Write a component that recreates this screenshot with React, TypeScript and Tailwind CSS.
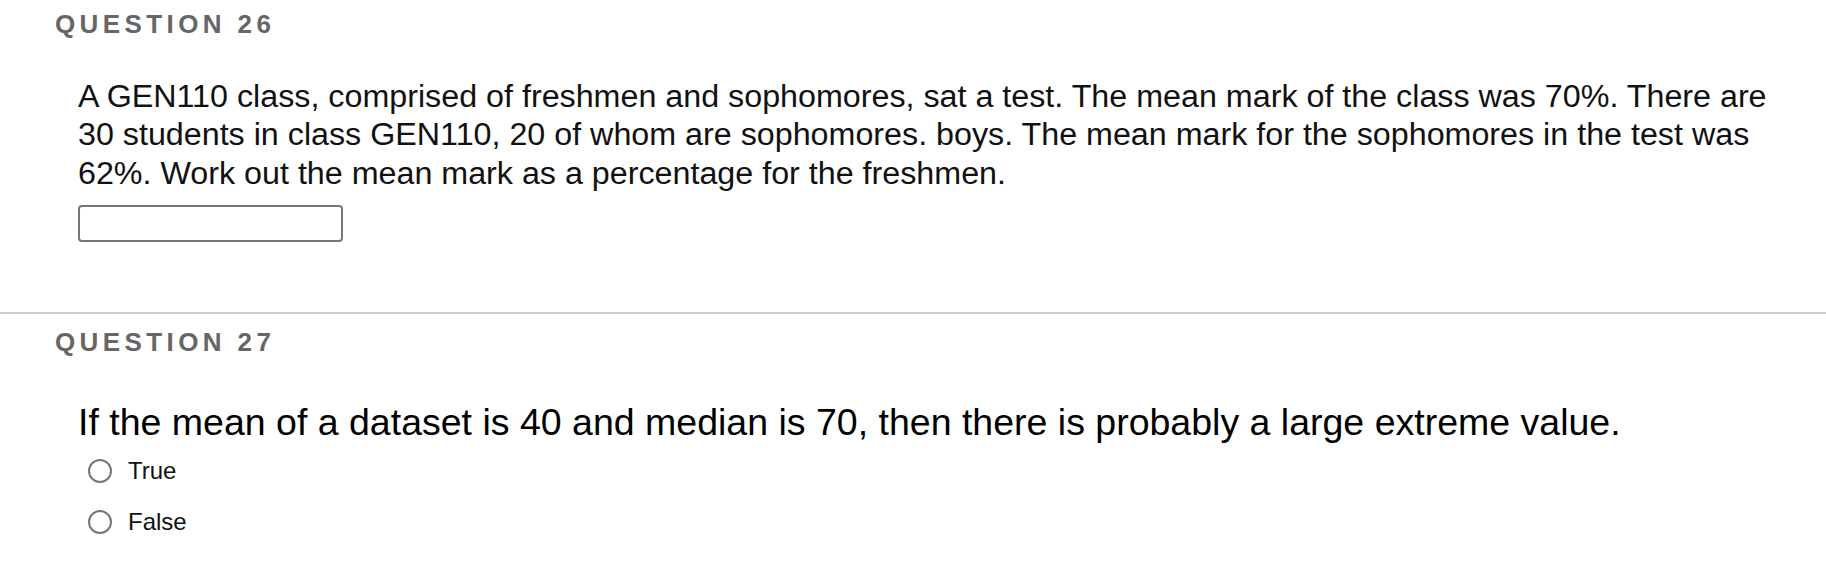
export default function App() {
  return (
    <div className="w-[1826px] h-[580px] bg-white overflow-hidden font-['Liberation_Sans',Arial,sans-serif]">
      {/* Question 26 */}
      <section className="pl-[55px] pr-[40px] pt-[9px] pb-[70px]">
        <h2 className="text-[26px] leading-[30px] font-bold tracking-[4.4px] text-[#666666]">QUESTION 26</h2>
        <div className="pl-[23px] mt-[38px]">
          <p className="text-[32.25px] leading-[38.4px] text-[#111111]">
            A GEN110 class, comprised of freshmen and sophomores, sat a test. The mean mark of the class was 70%. There are 30 students in class GEN110, 20 of whom are sophomores. boys. The mean mark for the sophomores in the test was 62%. Work out the mean mark as a percentage for the freshmen.
          </p>
          <input
            type="text"
            className="mt-[13px] block w-[265px] h-[37px] border-2 border-[#767676] rounded-[4px] bg-white"
          />
        </div>
      </section>

      <div className="h-[2px] bg-[#cccccc]" />

      {/* Question 27 */}
      <section className="pl-[55px] pr-[40px] pt-[13px]">
        <h2 className="text-[26px] leading-[30px] font-bold tracking-[4.4px] text-[#666666]">QUESTION 27</h2>
        <div className="pl-[23px] mt-[44px]">
          <p className="text-[37.5px] leading-[42px] text-black">
            If the mean of a dataset is 40 and median is 70, then there is probably a large extreme value.
          </p>
          <div className="mt-[13px] flex flex-col gap-[21px] pl-[10px]">
            {['True', 'False'].map((label) => (
              <label key={label} className="flex items-center gap-[16px] h-[30px]">
                <span className="w-[24px] h-[24px] rounded-full border-2 border-[#767676] bg-white shrink-0" />
                <span className="text-[24px] leading-[30px] text-[#111111]">{label}</span>
              </label>
            ))}
          </div>
        </div>
      </section>
    </div>
  );
}
